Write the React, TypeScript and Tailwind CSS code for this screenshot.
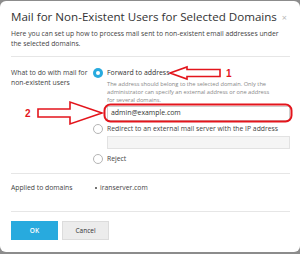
import React from "react";

function Radio({ checked }: { checked?: boolean }) {
  return checked ? (
    <span className="flex h-[10px] w-[10px] shrink-0 items-center justify-center rounded-full bg-[#28aade]">
      <span className="h-[4px] w-[4px] rounded-full bg-white" />
    </span>
  ) : (
    <span className="h-[10px] w-[10px] shrink-0 rounded-full border border-[#b5b5b5] bg-white" />
  );
}

export default function App() {
  return (
    <div
      className="relative h-[254px] w-[300px] overflow-hidden bg-[#8c8c8c] pt-[1px] pb-[2px]"
      style={{ fontFamily: '"Open Sans", "Liberation Sans", sans-serif' }}
    >
      <div className="flex h-full flex-col rounded-[6px] bg-white pl-[11px] pr-[10px] text-[#333]">
        <div className="mt-[9px] flex h-[14px] items-center justify-between">
          <div className="whitespace-nowrap text-[11.6px] leading-[14px] text-[#333]">
            Mail for Non-Existent Users for Selected Domains
          </div>
          <div className="pr-[3px] text-[9px] leading-none text-[#b8b8b8]">×</div>
        </div>
        <div className="mt-[5px] text-[6.8px] leading-[10px] text-[#444]">
          <div className="whitespace-nowrap">
            Here you can set up how to process mail sent to non-existent email addresses under
          </div>
          <div>the selected domains.</div>
        </div>
        <div className="mt-[7px] h-px bg-[#e6e6e6]" />
        <div className="mt-[11px] flex">
          <div className="w-[82px] shrink-0 text-[6.8px] leading-[10px] text-[#444]">
            <div className="whitespace-nowrap">What to do with mail for</div>
            <div>non-existent users</div>
          </div>
          <div className="flex flex-1 flex-col">
            <div className="flex gap-[4px]">
              <div className="flex h-[10px] items-center">
                <Radio checked />
              </div>
              <div className="flex flex-1 flex-col">
                <div className="text-[6.9px] leading-[10px] text-[#333]">Forward to address</div>
                <div className="mt-[2px] pr-[20px] text-[5.7px] leading-[8px] text-[#888]">
                  The address should belong to the selected domain. Only the administrator can specify an external address or one address for several domains.
                </div>
                <div className="mt-[2px] flex h-[15px] items-center border border-[#cfcfcf] bg-white px-[3px] text-[6.9px] text-[#333]">
                  admin@example.com
                </div>
              </div>
            </div>
            <div className="mt-[3px] flex gap-[4px]">
              <div className="flex h-[10px] items-center">
                <Radio />
              </div>
              <div className="flex flex-1 flex-col">
                <div className="whitespace-nowrap text-[6.8px] leading-[10px] text-[#444]">
                  Redirect to an external mail server with the IP address
                </div>
                <div className="mt-[2px] h-[13px] border border-[#e2e2e2] bg-[#f5f5f5]" />
              </div>
            </div>
            <div className="mt-[5px] flex gap-[4px]">
              <div className="flex h-[10px] items-center">
                <Radio />
              </div>
              <div className="text-[6.8px] leading-[10px] text-[#444]">Reject</div>
            </div>
          </div>
        </div>
        <div className="mt-[9px] h-px bg-[#e6e6e6]" />
        <div className="mt-[9px] flex text-[6.8px] leading-[10px] text-[#444]">
          <div className="w-[84px] shrink-0">Applied to domains</div>
          <div className="flex items-center gap-[3px]">
            <span className="h-[2px] w-[2px] rounded-full bg-[#444]" />
            <span>iranserver.com</span>
          </div>
        </div>
        <div className="mt-[18px] h-px bg-[#e6e6e6]" />
        <div className="mt-[9px] flex gap-[4px]">
          <div className="flex h-[19px] w-[47px] items-center justify-center bg-[#28aade] text-[6.5px] font-semibold text-white">
            OK
          </div>
          <div className="flex h-[19px] w-[47px] items-center justify-center border border-[#dcdcdc] bg-[#ececec] text-[6.5px] text-[#333]">
            Cancel
          </div>
        </div>
      </div>
      <svg className="pointer-events-none absolute left-0 top-0" width="300" height="254" viewBox="0 0 300 254">
        <g fill="none" stroke="#e3151c" strokeWidth="1.6" strokeLinejoin="miter">
          <path d="M170 73 L187 67 L187 69.5 L220 69.5 L220 76.5 L187 76.5 L187 79 Z" />
          <path d="M102 113 L70 102 L70 109 L38 109 L38 117 L70 117 L70 124 Z" />
          <rect x="104.5" y="104.5" width="187" height="17" rx="6" strokeWidth="2" />
        </g>
        <text x="226" y="77" fill="#e3151c" fontSize="10" fontWeight="bold" fontFamily="Liberation Sans, sans-serif">1</text>
        <text x="25" y="117" fill="#e3151c" fontSize="10" fontWeight="bold" fontFamily="Liberation Sans, sans-serif">2</text>
      </svg>
    </div>
  );
}
